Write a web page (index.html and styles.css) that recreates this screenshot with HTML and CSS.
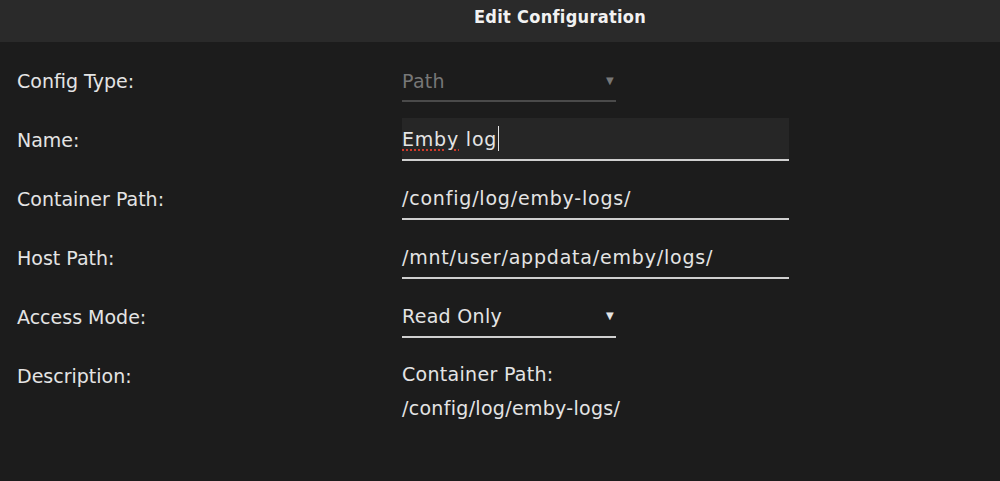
FILE: index.html
```html
<!DOCTYPE html>
<html lang="en">
  <head>
    <meta charset="UTF-8" />
    <title>Edit Configuration</title>
    <link rel="stylesheet" href="styles.css">
  </head>
  <body>
    <div class="title-bar">
      <h1>Edit Configuration</h1>
    </div>

    <div class="config-form">
      <div class="form-row">
        <label>Config Type:</label>
        <div class="field select disabled">
          <span>Path</span>
          <span class="arrow">&#9660;</span>
        </div>
      </div>

      <div class="form-row">
        <label>Name:</label>
        <div class="field text focused">
          <span><span class="misspelt">Emby</span> log</span><span class="caret"></span>
        </div>
      </div>

      <div class="form-row">
        <label>Container Path:</label>
        <div class="field text">
          <span>/config/log/emby-logs/</span>
        </div>
      </div>

      <div class="form-row">
        <label>Host Path:</label>
        <div class="field text">
          <span>/mnt/user/appdata/emby/logs/</span>
        </div>
      </div>

      <div class="form-row">
        <label>Access Mode:</label>
        <div class="field select">
          <span>Read Only</span>
          <span class="arrow">&#9660;</span>
        </div>
      </div>

      <div class="form-row">
        <label>Description:</label>
        <div class="description">
          Container Path:<br />/config/log/emby-logs/
        </div>
      </div>
    </div>
  </body>
</html>
```

FILE: styles.css
```css
body {
  margin: 0;
  font-family: "DejaVu Sans", "Noto Sans", sans-serif;
  font-size: 19px;
  color: #e4e4e4;
  background-color: #1c1c1c;
}
.title-bar {
  height: 42px;
  background: #2a2a2a;
  display: flex;
  justify-content: center;
  padding-left: 120px;
}
.title-bar h1 {
  margin: 0;
  padding-top: 6px;
  font-family: "DejaVu Sans Condensed", "DejaVu Sans", sans-serif;
  font-size: 18px;
  font-weight: 700;
  letter-spacing: 0.3px;
  color: #f2f2f2;
}
.config-form {
  padding: 18px 0 0 17px;
}
.form-row {
  display: grid;
  grid-template-columns: 385px 1fr;
  margin-bottom: 17px;
}
.form-row label {
  line-height: 42px;
}
.field {
  height: 40px;
  border-bottom: 2px solid #cfcfcf;
  display: flex;
  align-items: center;
  box-sizing: content-box;
  letter-spacing: 0.8px;
}
.field.text {
  width: 387px;
}
.field.focused {
  background: #262626;
  height: 41px;
  margin-top: -1px;
}
.field.select {
  width: 214px;
  justify-content: space-between;
  letter-spacing: 0.3px;
}
.field.disabled {
  color: #777;
  border-bottom-color: #4a4a4a;
  padding-top: 2px;
  height: 38px;
}
.arrow {
  font-size: 10px;
  padding-right: 2px;
  margin-top: -2px;
}
.misspelt {
  text-decoration: underline dotted #d03a2a;
  text-decoration-thickness: 2px;
  text-underline-offset: 4px;
}
.caret {
  display: inline-block;
  width: 1px;
  height: 25px;
  background: #e4e4e4;
  margin-left: 1px;
}
.description {
  line-height: 34px;
  padding-top: 2px;
  letter-spacing: 0.3px;
}
```
